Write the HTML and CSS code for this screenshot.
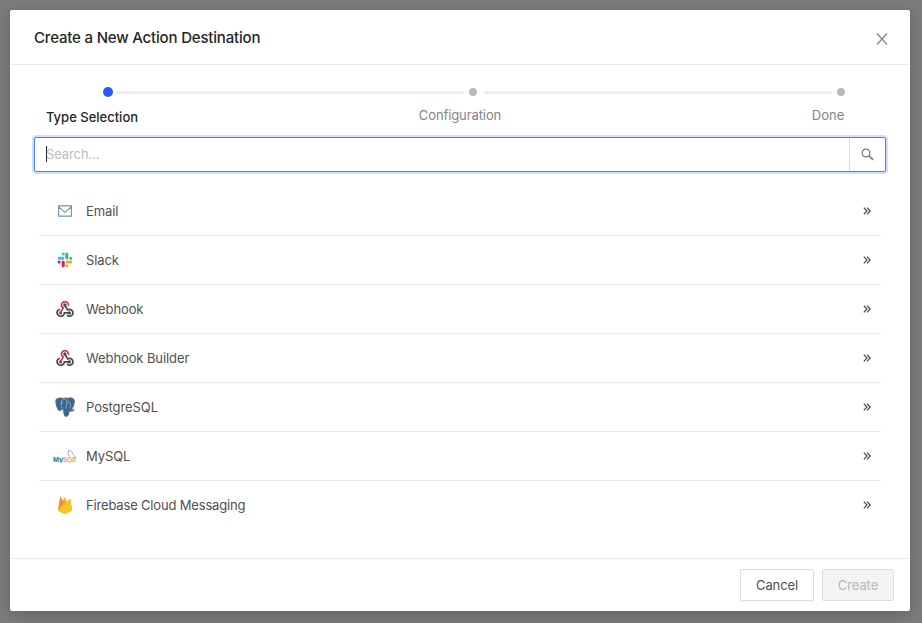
FILE: index.html
```html
<!DOCTYPE html>
<html lang="en">
<head>
<meta charset="utf-8">
<title>Create a New Action Destination</title>
<link rel="stylesheet" href="styles.css">
</head>
<body>
<svg class="defs" width="0" height="0" aria-hidden="true">
  <symbol id="chevrons" viewBox="0 0 8 8"><path d="M.8.7 4 4 .8 7.3M4 .7 7.2 4 4 7.3" fill="none" stroke="#444" stroke-width="1.15"/></symbol>
  <symbol id="webhook" viewBox="0 0 18 18">
    <g fill="none" stroke-width="1.7">
      <path d="M4.300 12.600 7.200 8C3.800 5.100 6 1.700 8.900 1.700c2.500 0 3.900 1.900 3.500 4.100" stroke="#c93763"/>
      <path d="m8.800 5 2.800 4.900c3-1.400 5.400.5 5.400 2.900 0 3.300-3.900 4.400-6 2.300" stroke="#4b4b4b"/>
      <path d="M13.300 12.900H8.500c-.6 3.700-4.800 4.200-6.500 2.100C.2 12.800 1.200 10 3.700 9.200" stroke="#4b4b4b"/>
    </g>
    <circle cx="8.900" cy="5" r="1.700" fill="#4b4b4b"/><circle cx="4.500" cy="12.900" r="1.700" fill="#c93763"/><circle cx="13.300" cy="12.900" r="1.700" fill="#4b4b4b"/>
  </symbol>
</svg>
<main class="modal">
  <header class="header">
    <h1>Create a New Action Destination</h1>
    <svg class="close" width="12" height="12" viewBox="0 0 12 12"><path d="m1 .5 10 11M11 .5 1 11.500" fill="none" stroke="#858585" stroke-width="1.250"/></svg>
  </header>
  <section class="body">
    <div class="track"><i class="dot active"></i><i class="line first"></i><i class="dot"></i><i class="line"></i><i class="dot"></i></div>
    <div class="labels"><span class="current">Type Selection</span><span class="config">Configuration</span><span>Done</span></div>
    <div class="search">
      <div class="field"><i class="caret"></i><span>Search...</span></div>
      <div class="lookup"><svg width="13" height="13" viewBox="0 0 13 13"><g fill="none" stroke="#777" stroke-width="1.200"><circle cx="5" cy="5" r="3.900"/><path d="m7.900 7.900 4.200 4" stroke-width="1.500"/></g></svg></div>
    </div>
    <ul class="list">
      <li><span class="icon"><svg width="14" height="12" viewBox="0 0 14 12"><path d="M.6.900h12.800v10.200H.6zM.8 2 7 7.300 13.200 2" fill="none" stroke="#6f95a8" stroke-width="1.100"/></svg></span><span class="name">Email</span><svg class="go"><use href="#chevrons"/></svg></li>
      <li><span class="icon"><svg width="16" height="16" viewBox="0 0 16 16"><g stroke-width="3" stroke-linecap="round"><path d="M2.100 6.200h3.800M6.200 2.100h.1" stroke="#42bfe8"/><path d="M9.800 2.100v3.800M13.700 6.200h.1" stroke="#3eb489"/><path d="M10.100 9.900h3.700M9.800 13.800h.1" stroke="#e7ad35"/><path d="M6.200 10v3.800M2.100 9.900h.1" stroke="#d91b5c"/></g></svg></span><span class="name">Slack</span><svg class="go"><use href="#chevrons"/></svg></li>
      <li><span class="icon"><svg width="18" height="18"><use href="#webhook"/></svg></span><span class="name">Webhook</span><svg class="go"><use href="#chevrons"/></svg></li>
      <li><span class="icon"><svg width="18" height="18"><use href="#webhook"/></svg></span><span class="name">Webhook Builder</span><svg class="go"><use href="#chevrons"/></svg></li>
      <li><span class="icon"><svg width="20" height="20" viewBox="0 0 20 20"><path d="M4.500 1C1.500 1 .4 3 1 6c.6 3.500 2 7.600 3.700 7.500.9 0 1.500-1 2.300-1.500 1 .6 1.600.6 1.700 1.200.2 2.200-.1 6.100 2.400 6.100 3 0 2.700-3.700 2.900-5.400 2.400.6 4.400-.2 4.800-1-1.500.1-2.400.1-2.300-.4 1.800-2.500 3.800-8 2.300-10-1.900-2.200-4.500-1.700-6-1.100-1.700-.5-2.900-.4-4.200.2C7.300 1.100 6 1 4.500 1Z" fill="#336791" stroke="#66717a" stroke-width="1.100"/><path d="M7.300 11.800C5.800 9.500 6 5 7.200 3c1.200-1.400 3.600-1 4.100.6.700 2.500.1 5.500-.5 8.100M12.600 3c2.500 1.600 3.800 5.200 2 8.400M6.200 6.300l2.100-.4m3.900.1 2-.3" fill="none" stroke="#a9c0d2" stroke-width=".7"/></svg></span><span class="name">PostgreSQL</span><svg class="go"><use href="#chevrons"/></svg></li>
      <li><span class="icon"><svg width="24" height="14" viewBox="0 0 24 14"><text x="0" y="12.500" class="my" textLength="10" lengthAdjust="spacingAndGlyphs">My</text><text x="10" y="12.500" class="sql" textLength="13" lengthAdjust="spacingAndGlyphs">SQL</text><path d="M16.300 7.600c-.8-2-1.900-5.900-.5-6.300 2.400.2 4 2.400 4.500 4.600 1.100.9 2 1.800 2.500 3l-1.700-.2 1.500 2.200" fill="none" stroke="#7c9db2" stroke-width=".8"/></svg></span><span class="name">MySQL</span><svg class="go"><use href="#chevrons"/></svg></li>
      <li><span class="icon"><svg width="16" height="20" viewBox="0 0 16 20"><path d="M1 15.500 3.300 1.400l2.600 4 1.800-3.100 2.200 4.200 3.400-2.800 1.700 11.800-7 3.700Z" fill="#ffa726"/><path d="m1 15.500 2.300-14.100 3.300 6.700Z" fill="#f48c2b"/><path d="m1 15.500 12.300-11.800L15 15.500l-7 3.700Z" fill="#f7c52d"/></svg></span><span class="name firebase">Firebase Cloud Messaging</span><svg class="go"><use href="#chevrons"/></svg></li>
    </ul>
  </section>
  <footer class="footer"><button class="cancel">Cancel</button><button class="create" disabled>Create</button></footer>
</main>
</body>
</html>
```
FILE: styles.css
```css
* { box-sizing: border-box; }
body { margin: 0; height: 623px; padding: 10px 12px 12px 10px; overflow: hidden; background: #7b7c7e; font: 13px/20px Inter, "Liberation Sans", sans-serif; color: #505050; }
.defs { position: absolute; }
.modal { width: 900px; height: 601px; background: #fff; border-radius: 2px; box-shadow: 0 4px 16px rgba(0,0,0,.2); display: flex; flex-direction: column; }
.header { height: 55px; border-bottom: 1px solid #ebebeb; padding: 0 22px 0 24px; display: flex; align-items: center; justify-content: space-between; }
h1 { margin: 2px 0 0; font-size: 15px; line-height: 22px; font-weight: 500; letter-spacing: -.18px; color: #262626; }
.close { margin-top: 3px; }
.body { flex: 1; padding: 22px 24px 0; }
.track { display: flex; align-items: center; height: 10px; padding: 0 41px 0 69px; }
.dot { width: 8px; height: 8px; border-radius: 50%; background: #b8b8b8; }
.active { width: 10px; height: 10px; background: #2559ff; }
.line { height: 3px; width: 348px; margin: 1px 5px 0 7px; background: #ededed; }
.line.first { margin: 1px 5px 0 3px; }
.labels { display: flex; justify-content: space-between; margin: 8px -12px 0; height: 32px; color: #858585; }
.labels span { width: 140px; text-align: center; white-space: nowrap; }
.labels .current { color: #262626; font-weight: 500; padding-top: 2px; }
.labels .config { letter-spacing: -.1px; }
.search { height: 35px; border: 1px solid #4b7bff; border-radius: 2px; box-shadow: 0 0 0 2px #d2deff; display: flex; }
.field { flex: 1; padding: 0 0 1px 11px; display: flex; align-items: center; color: #bdbdbd; letter-spacing: -.1px; }
.caret { width: 1px; height: 16px; margin-right: -1px; background: #222; }
.lookup { width: 36px; border-left: 1px solid #d9d9d9; display: flex; align-items: center; justify-content: center; }
.list { list-style: none; margin: 15px 5px 0; padding: 0; }
li { height: 49px; border-bottom: 1px solid #ebebeb; display: flex; align-items: center; padding: 0 10px 0 14px; }
li:last-child { border-bottom-color: transparent; }
.icon { width: 24px; height: 24px; margin-right: 9px; display: flex; align-items: center; justify-content: center; }
.name { letter-spacing: -.1px; }
.firebase { letter-spacing: -.17px; }
.go { width: 8px; height: 8px; margin-left: auto; }
.my, .sql { font: bold 6.5px "Liberation Sans", sans-serif; fill: #246e93; }
.sql { fill: #f29a2e; }
.footer { height: 53px; border-top: 1px solid #ebebeb; padding: 10px 16px; display: flex; justify-content: flex-end; gap: 8px; }
button { height: 32px; padding: 0; border: 1px solid #dedede; border-radius: 2px; font: inherit; letter-spacing: -.1px; }
.cancel { width: 74px; background: #fff; color: #505050; box-shadow: 0 2px 0 #fafafa; }
.create { width: 72px; background: #f3f3f3; color: #b8b8b8; }
```
